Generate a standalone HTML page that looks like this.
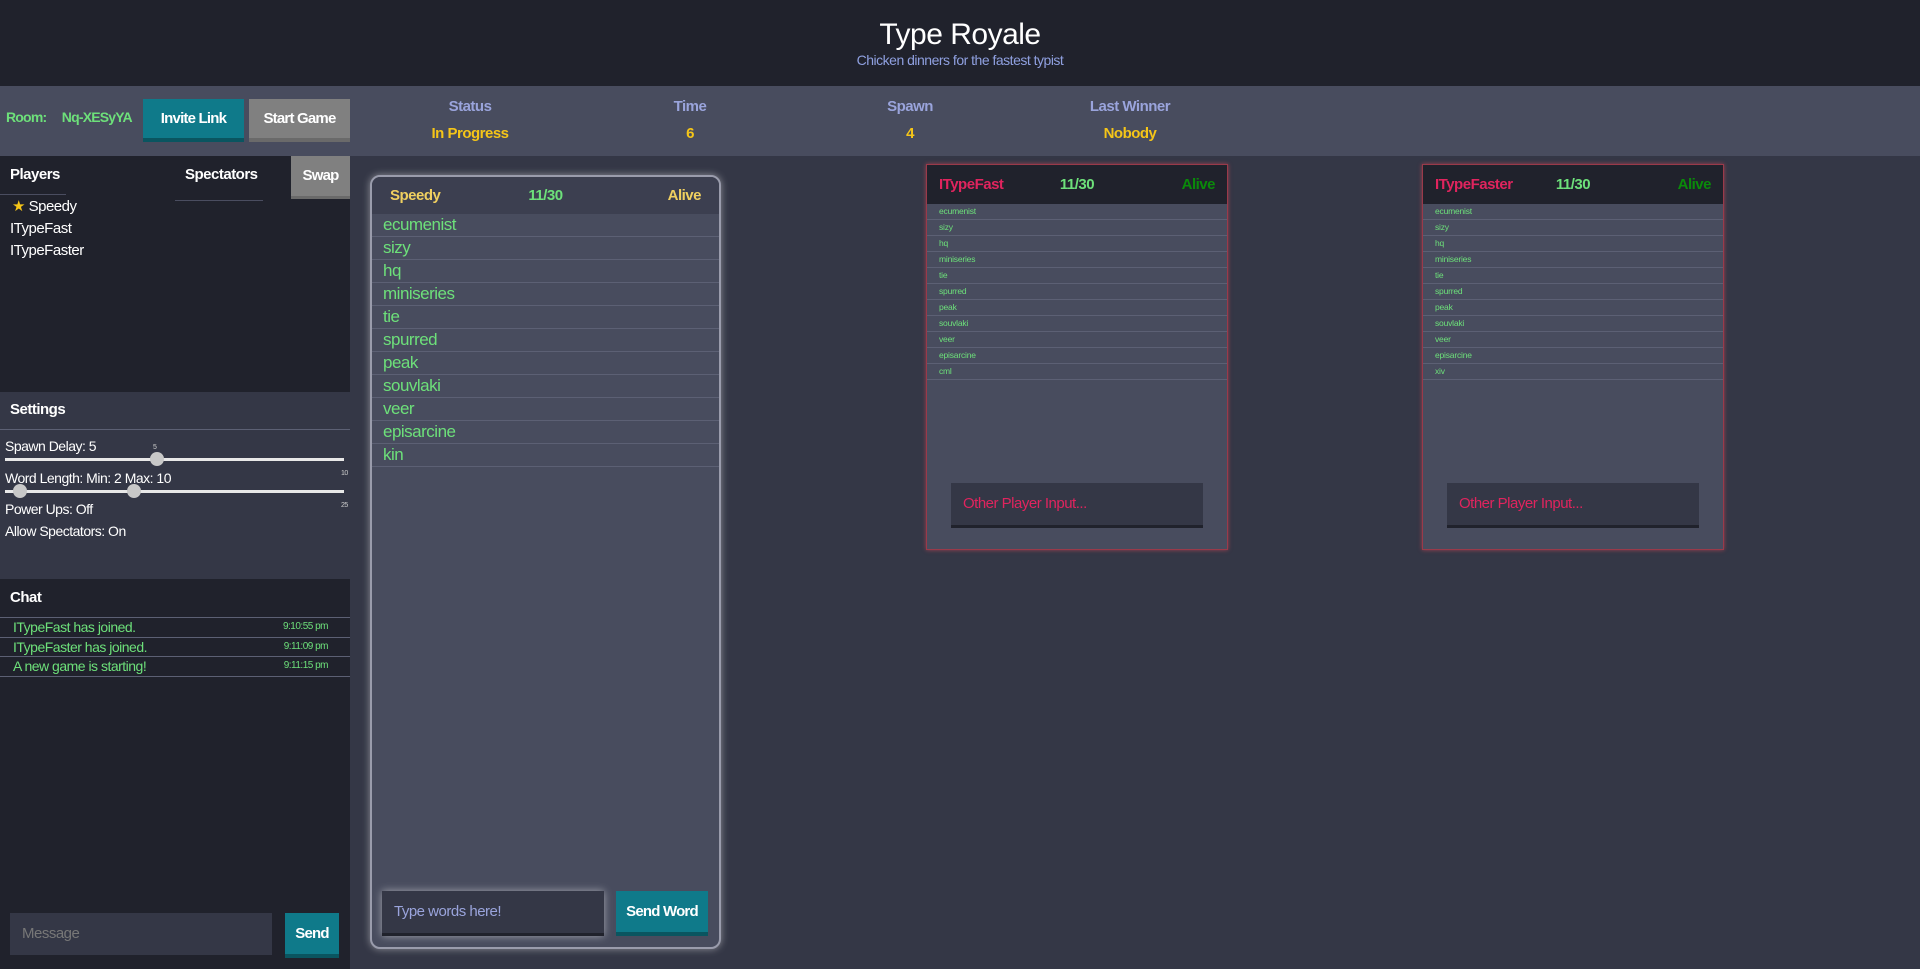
<!DOCTYPE html>
<html><head><meta charset="utf-8"><style>
*{box-sizing:border-box;margin:0;padding:0}
body{width:1920px;height:969px;overflow:hidden;background:#343746;font-family:"Liberation Sans",sans-serif;color:#fff;position:relative;letter-spacing:-0.5px}
.a{position:absolute}
.hdr{left:0;top:0;width:1920px;height:86px;background:#20222c;text-align:center}
.bar{left:0;top:86px;width:1920px;height:70px;background:#484c5e}
.btn{position:absolute;color:#fff;font-weight:bold;font-size:15px;text-align:center;letter-spacing:-0.8px}
.col{position:absolute;width:200px;text-align:center;font-weight:bold}
.col .l{color:#9aa4dc;font-size:15px;position:absolute;top:12px;width:200px}
.col .v{color:#f5c518;font-size:15px;position:absolute;top:39px;width:200px}
.dark{background:#20222c}
.g{color:#6de07a}
.word{height:23px;border-bottom:1px solid #5c6074;color:#6de07a;font-size:17px;padding-left:11px;line-height:22px}
.sw{height:16px;border-bottom:1px solid #5c6074;color:#6de07a;font-size:8.5px;padding-left:12px;line-height:15px;letter-spacing:-0.2px}
.slider{height:3px;background:#e8e8e8}
.thumb{position:absolute;width:14px;height:14px;border-radius:50%;background:#c8c8c8}
.msg{height:19.5px;border-bottom:1px solid #5c6074;color:#6de07a;font-size:14px;padding-left:13px;position:relative;line-height:18px}
.msg span{position:absolute;right:22px;top:0;font-size:10px}
.card{position:absolute;background:#484c5e;border:1px solid #9a3a4a;box-shadow:0 0 4px #a04050}
.ch{height:39px;background:#20222c;position:relative;font-weight:bold;font-size:15px}
</style></head><body>
<div class="a hdr"><div style="padding-top:18px;font-size:30px">Type Royale</div><div style="font-size:14px;color:#8fa0e0;margin-top:0px">Chicken dinners for the fastest typist</div></div>
<div class="a bar">
<div class="a g" style="left:6px;top:23px;font-size:14px;font-weight:bold;letter-spacing:-0.8px">Room:&nbsp;&nbsp;&nbsp;&nbsp;&nbsp;Nq-XESyYA</div>
<div class="btn" style="left:143px;top:13px;width:101px;height:43px;background:#0f7a8a;border-bottom:4px solid #0a5560;line-height:40px">Invite Link</div>
<div class="btn" style="left:249px;top:13px;width:101px;height:43px;background:#808080;border-bottom:4px solid #6a6a6a;line-height:40px">Start Game</div>
<div class="col" style="left:370px"><div class="l">Status</div><div class="v">In Progress</div></div>
<div class="col" style="left:590px"><div class="l">Time</div><div class="v">6</div></div>
<div class="col" style="left:810px"><div class="l">Spawn</div><div class="v">4</div></div>
<div class="col" style="left:1030px"><div class="l">Last Winner</div><div class="v">Nobody</div></div>
</div>
<!-- players -->
<div class="a dark" style="left:0;top:156px;width:350px;height:236px">
<div class="a" style="left:10px;top:10px;font-weight:bold;font-size:15px">Players</div>
<div class="a" style="left:0;top:38px;width:66px;height:1px;background:#4a4d60"></div>
<div class="a" style="left:185px;top:10px;font-weight:bold;font-size:15px">Spectators</div>
<div class="a" style="left:175px;top:44px;width:88px;height:1px;background:#4a4d60"></div>
<div class="btn" style="left:291px;top:0;width:59px;height:43px;background:#808080;border-bottom:3px solid #6a6a6a;line-height:40px">Swap</div>
<div class="a" style="left:12px;top:40px;font-size:15px;line-height:22px"><span style="color:#f5c518">★</span> Speedy<br><span style="margin-left:-2px">ITypeFast</span><br><span style="margin-left:-2px">ITypeFaster</span></div>
</div>
<!-- settings -->
<div class="a" style="left:0;top:392px;width:350px;height:187px;background:#343746">
<div class="a" style="left:10px;top:9px;font-weight:bold;font-size:15px">Settings</div>
<div class="a" style="left:0;top:37px;width:350px;height:1px;background:#5c6074"></div>
<div class="a" style="left:5px;top:46px;font-size:14px">Spawn Delay: 5</div>
<div class="a" style="left:153px;top:52px;font-size:7px;color:#ccc">5</div>
<div class="a slider" style="left:5px;top:66px;width:339px"></div><div class="thumb" style="left:150px;top:60px"></div>
<div class="a" style="left:5px;top:78px;font-size:14px">Word Length: Min: 2 Max: 10</div>
<div class="a" style="left:341px;top:78px;font-size:7px;color:#ccc">10</div>
<div class="a slider" style="left:5px;top:98px;width:339px"></div><div class="thumb" style="left:13px;top:92px"></div><div class="thumb" style="left:127px;top:92px"></div>
<div class="a" style="left:341px;top:110px;font-size:7px;color:#ccc">25</div>
<div class="a" style="left:5px;top:109px;font-size:14px">Power Ups: Off</div>
<div class="a" style="left:5px;top:131px;font-size:14px">Allow Spectators: On</div>
</div>
<!-- chat -->
<div class="a dark" style="left:0;top:579px;width:350px;height:390px">
<div class="a" style="left:10px;top:10px;font-weight:bold;font-size:15px">Chat</div>
<div class="a" style="left:0;top:38px;width:350px;border-top:1px solid #5c6074">
<div class="msg">ITypeFast has joined.<span>9:10:55 pm</span></div>
<div class="msg">ITypeFaster has joined.<span>9:11:09 pm</span></div>
<div class="msg">A new game is starting!<span>9:11:15 pm</span></div>
</div>
<div class="a" style="left:10px;top:334px;width:262px;height:42px;background:#343746;color:#777;font-size:15px;line-height:42px;padding-left:12px">Message</div>
<div class="btn" style="left:285px;top:334px;width:54px;height:45px;background:#0f7a8a;border-bottom:4px solid #0a5560;line-height:42px">Send</div>
</div>
<!-- speedy card -->
<div class="a" style="left:370px;top:175px;width:351px;height:774px;background:#484c5e;border:2px solid #9a9cac;border-radius:10px;box-shadow:0 0 8px rgba(255,255,255,.45)">
<div style="height:37px;background:#3c3f50;border-radius:8px 8px 0 0;position:relative;font-weight:bold;font-size:15px">
<span class="a" style="left:18px;top:10px;color:#f0d060">Speedy</span>
<span class="a g" style="left:0;width:100%;text-align:center;top:10px">11/30</span>
<span class="a" style="right:18px;top:10px;color:#f0d060">Alive</span></div>
<div class="word">ecumenist</div><div class="word">sizy</div><div class="word">hq</div><div class="word">miniseries</div><div class="word">tie</div><div class="word">spurred</div><div class="word">peak</div><div class="word">souvlaki</div><div class="word">veer</div><div class="word">episarcine</div><div class="word">kin</div>
<div class="a" style="left:10px;top:714px;width:222px;height:45px;background:#343746;border-bottom:3px solid #20222c;box-shadow:0 0 8px rgba(255,255,255,.5);color:#9aa4dc;font-size:15px;line-height:42px;padding-left:12px">Type words here!</div>
<div class="btn" style="left:244px;top:714px;width:92px;height:45px;background:#0f7a8a;border-bottom:4px solid #0a5560;line-height:42px">Send Word</div>
</div>
<!-- other cards -->
<div class="card" style="left:926px;top:164px;width:302px;height:386px">
<div class="ch"><span class="a" style="left:12px;top:11px;color:#e0245e">ITypeFast</span><span class="a g" style="left:0;width:100%;text-align:center;top:11px">11/30</span><span class="a" style="right:12px;top:11px;color:#0a8a0a">Alive</span></div>
<div class="sw">ecumenist</div><div class="sw">sizy</div><div class="sw">hq</div><div class="sw">miniseries</div><div class="sw">tie</div><div class="sw">spurred</div><div class="sw">peak</div><div class="sw">souvlaki</div><div class="sw">veer</div><div class="sw">episarcine</div><div class="sw">cml</div>
<div class="a" style="left:24px;top:318px;width:252px;height:45px;background:#343746;border-bottom:3px solid #20222c;color:#e0245e;font-size:15px;line-height:42px;padding-left:12px">Other Player Input...</div>
</div>
<div class="card" style="left:1422px;top:164px;width:302px;height:386px">
<div class="ch"><span class="a" style="left:12px;top:11px;color:#e0245e">ITypeFaster</span><span class="a g" style="left:0;width:100%;text-align:center;top:11px">11/30</span><span class="a" style="right:12px;top:11px;color:#0a8a0a">Alive</span></div>
<div class="sw">ecumenist</div><div class="sw">sizy</div><div class="sw">hq</div><div class="sw">miniseries</div><div class="sw">tie</div><div class="sw">spurred</div><div class="sw">peak</div><div class="sw">souvlaki</div><div class="sw">veer</div><div class="sw">episarcine</div><div class="sw">xiv</div>
<div class="a" style="left:24px;top:318px;width:252px;height:45px;background:#343746;border-bottom:3px solid #20222c;color:#e0245e;font-size:15px;line-height:42px;padding-left:12px">Other Player Input...</div>
</div>
</body></html>
